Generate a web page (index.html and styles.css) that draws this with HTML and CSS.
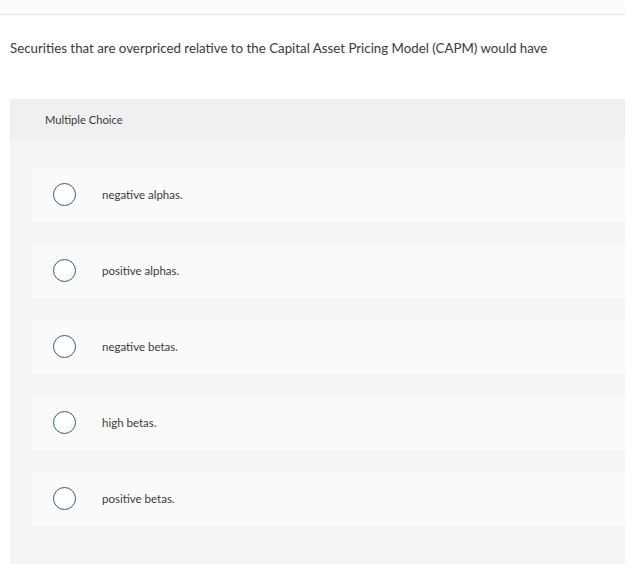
FILE: index.html
```html
<!DOCTYPE html>
<html>
<head>
<meta charset="utf-8">
<link rel="stylesheet" href="styles.css">
</head>
<body>
<div class="topbar"></div>
<p class="question">Securities that are overpriced relative to the Capital Asset Pricing Model (CAPM) would have</p>
<section class="panel">
  <div class="panel-head">Multiple Choice</div>
  <div class="options">
    <label class="option"><span class="radio"></span><span class="opt-text">negative alphas.</span></label>
    <label class="option"><span class="radio"></span><span class="opt-text">positive alphas.</span></label>
    <label class="option"><span class="radio"></span><span class="opt-text">negative betas.</span></label>
    <label class="option"><span class="radio"></span><span class="opt-text">high betas.</span></label>
    <label class="option"><span class="radio"></span><span class="opt-text">positive betas.</span></label>
  </div>
</section>
</body>
</html>
```

FILE: styles.css
```css
html, body {
  margin: 0;
  padding: 0;
  background: #ffffff;
  font-family: Lato, "Open Sans", Arial, sans-serif;
  color: #333333;
}
body {
  width: 625px;
  height: 564px;
  overflow: hidden;
}
.topbar {
  height: 14px;
  background: #fbfbfb;
  border-bottom: 1px solid #e9e9e9;
}
.question {
  margin: 0;
  padding: 25px 0 0 10px;
  height: 59px;
  font-size: 13.3px;
  line-height: 16px;
  color: #3a3a3a;
}
.panel {
  margin-left: 10px;
  background: #f5f5f5;
  height: 480px;
}
.panel-head {
  height: 41px;
  background: #f0f0f0;
  padding-left: 35px;
  font-size: 11.2px;
  line-height: 42px;
  color: #3a3a3a;
}
.options {
  display: flex;
  flex-direction: column;
  gap: 21px;
  padding: 27px 0 0 22px;
}
.option {
  display: flex;
  align-items: center;
  height: 55px;
  background: #fafafa;
  padding-left: 21px;
}
.radio {
  width: 21px;
  height: 21px;
  border: 1.6px solid #2d5b88;
  border-radius: 50%;
  background: #fff;
  flex: none;
}
.opt-text {
  margin-left: 26px;
  font-size: 11.5px;
  color: #3a3a3a;
}
```
